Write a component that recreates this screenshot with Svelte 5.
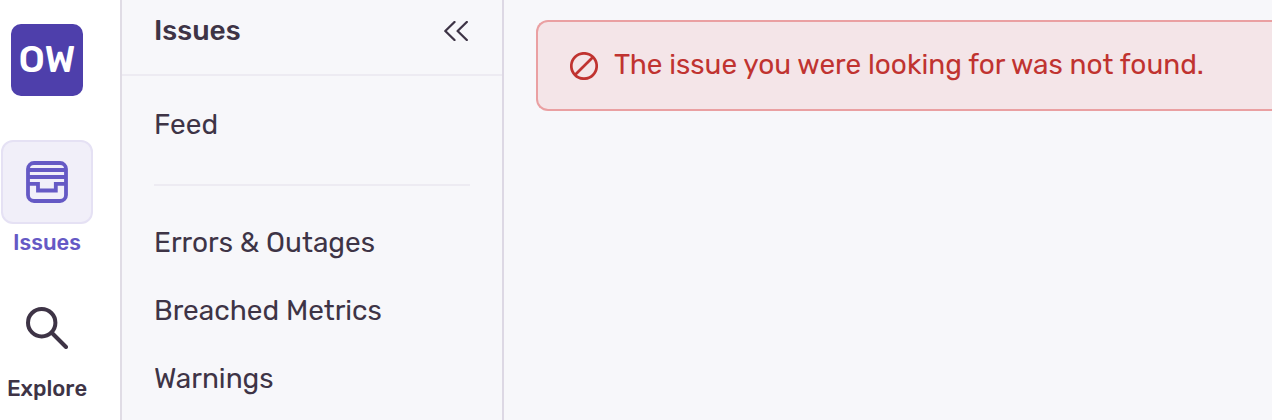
<script>
  const views = ['Errors & Outages', 'Breached Metrics', 'Warnings'];

  let collapsed = $state(false);
</script>

<div class="app">
  <nav class="rail" aria-label="Primary">
    <button class="org" type="button">OW</button>

    <a class="item active" href="#issues" aria-current="page">
      <span class="tile">
        <svg width="42" height="42" viewBox="0 0 42 42" fill="none" stroke="currentColor" stroke-width="3.8">
          <rect x="2" y="2" width="38" height="38" rx="6" />
          <path d="M3 9H39M3 16H39M3 22.8H12V29.5H29.8V22.8H39" />
        </svg>
      </span>
      <span class="label">Issues</span>
    </a>

    <a class="item" href="#explore">
      <span class="tile">
        <svg width="42" height="42" viewBox="0 0 42 42" fill="none" stroke="currentColor" stroke-width="4" stroke-linecap="round">
          <circle cx="15.7" cy="15.7" r="13.7" />
          <path d="M26 26L40 40" />
        </svg>
      </span>
      <span class="label">Explore</span>
    </a>
  </nav>

  <aside class="panel" class:collapsed>
    <header>
      <h1>Issues</h1>
      <button class="collapse" type="button" aria-label="Collapse" onclick={() => (collapsed = !collapsed)}>
        <svg width="24" height="20" viewBox="0 0 24 20" fill="none" stroke="currentColor" stroke-width="2.3" stroke-linecap="round" stroke-linejoin="round">
          <path d="M10.5 1L1.3 10L10.5 19M22.8 1L13.6 10L22.8 19" />
        </svg>
      </button>
    </header>
    <ul>
      <li><a href="#feed">Feed</a></li>
    </ul>
    <hr />
    <ul>
      {#each views as view}
        <li><a href="#views">{view}</a></li>
      {/each}
    </ul>
  </aside>

  <main>
    <div class="alert" role="alert">
      <svg width="28" height="28" viewBox="0 0 28 28" fill="none" stroke="currentColor" stroke-width="2.7">
        <circle cx="14" cy="14" r="12.7" />
        <path d="M5.2 22.8L22.8 5.2" />
      </svg>
      <span>The issue you were looking for was not found.</span>
    </div>
  </main>
</div>

<style>
  :global(body) { margin: 0; background: #f7f7fa; }
  .app { display: flex; height: 100vh; overflow: hidden; font-family: Rubik, Roboto, sans-serif; font-size: 28px; line-height: 36px; color: #3e3446; }
  a { color: inherit; text-decoration: none; }
  button { border: none; padding: 0; font: inherit; color: inherit; cursor: pointer; }
  svg { display: block; flex: none; }

  .rail { flex: none; width: 94px; padding: 24px 26px 0 0; display: flex; flex-direction: column; align-items: center; background: #fff; border-right: 2px solid #e0dce5; }
  .org { flex: none; width: 72px; height: 72px; margin-bottom: 44px; padding-bottom: 2px; border-radius: 10px; background: #4e3fab; color: #fff; font-size: 38px; font-weight: 500; }
  .item { display: flex; flex-direction: column; align-items: center; margin-bottom: 24px; }
  .tile { box-sizing: border-box; width: 92px; height: 84px; display: flex; align-items: center; justify-content: center; border: 2px solid transparent; border-radius: 12px; }
  .label { font-size: 22px; line-height: 38px; font-weight: 500; }
  .active { color: #6559c5; }
  .active .tile { background: #f1eff9; border-color: #e5e1f4; }

  .panel { flex: none; width: 380px; border-right: 2px solid #ddd8e4; }
  .collapsed { display: none; }
  header { height: 74px; padding: 0 32px; display: flex; align-items: flex-start; justify-content: space-between; border-bottom: 2px solid #edebf2; }
  h1 { margin: 13px 0 0; font-size: 28px; font-weight: 500; }
  .collapse { margin-top: 21px; padding: 0 2px; background: none; }
  ul { list-style: none; margin: 0; padding: 15px 32px 25px; }
  hr { margin: 0 32px; border: none; border-top: 2px solid #edebf2; }
  hr + ul { padding-top: 23px; }
  li a { display: block; padding: 16px 0; }

  main { flex: 1; min-width: 0; padding: 20px 0 0 32px; }
  .alert { display: flex; align-items: flex-end; gap: 16px; padding: 28px 32px 29px; background: #f4e5e8; border: 2px solid #eaa0a2; border-right: none; border-radius: 12px 0 0 12px; color: #c03330; line-height: 30px; white-space: nowrap; }
</style>
